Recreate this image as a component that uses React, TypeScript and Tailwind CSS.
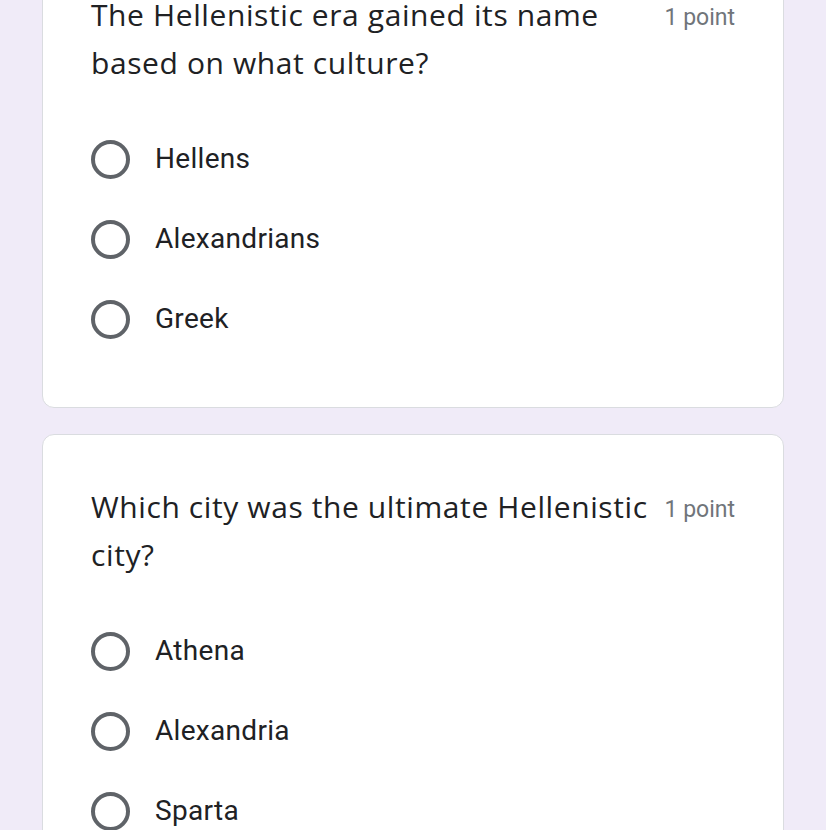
const questions = [
  {
    title: "The Hellenistic era gained its name based on what culture?",
    options: ["Hellens", "Alexandrians", "Greek"],
  },
  {
    title: "Which city was the ultimate Hellenistic city?",
    options: ["Athena", "Alexandria", "Sparta"],
  },
];

const Radio = () => (
  <div className="w-[39px] h-[39px] shrink-0 rounded-full border-[4px] border-[#5f6368]" />
);

const QuestionCard = ({ title, options }: { title: string; options: string[] }) => (
  <div className="bg-white border border-[#dadce0] rounded-[12px] pt-[48px] pb-[48px] pl-[48px] pr-[48px]">
    <div className="flex items-start">
      <div
        className="flex-1 text-[30px] leading-[48px] tracking-[0.6px] text-[#202124]"
        style={{ fontFamily: "'Open Sans', Roboto, sans-serif" }}
      >
        {title}
      </div>
      <div className="ml-[12px] mt-[12px] text-[23px] leading-[30px] text-[#70757a] whitespace-nowrap">
        1 point
      </div>
    </div>
    <div className="mt-[32px] flex flex-col">
      {options.map((opt) => (
        <div key={opt} className="h-[80px] flex items-center gap-[25px]">
          <Radio />
          <span className="text-[28px] text-[#202124] tracking-[0.3px]">{opt}</span>
        </div>
      ))}
    </div>
  </div>
);

export default function App() {
  return (
    <div
      className="min-h-screen bg-[#f0ebf8] px-[42px] overflow-hidden"
      style={{ fontFamily: "Roboto, 'Liberation Sans', sans-serif" }}
    >
      <div className="-mt-[58px] flex flex-col gap-[26px]">
        {questions.map((q) => (
          <QuestionCard key={q.title} title={q.title} options={q.options} />
        ))}
      </div>
    </div>
  );
}
